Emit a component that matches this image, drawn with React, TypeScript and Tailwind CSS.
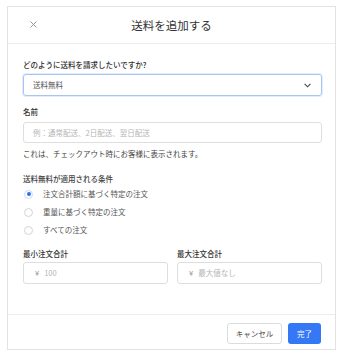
import React from 'react';

const font = { fontFamily: '"Noto Sans CJK JP", "Noto Sans", sans-serif' };

const Radio = ({ checked, label }: { checked?: boolean; label: string }) => (
  <div className="flex items-center h-[18px]">
    <span
      className={
        checked
          ? "w-[9px] h-[9px] rounded-full border border-[#c9dafb] bg-white flex items-center justify-center"
          : "w-[9px] h-[9px] rounded-full border border-[#d4d4d4] bg-white"
      }
    >
      {checked && <span className="w-[4px] h-[4px] rounded-full bg-[#2f6fed]" />}
    </span>
    <span className="ml-[10px] text-[7.5px] leading-[10px] text-[#555]">{label}</span>
  </div>
);

const App = () => {
  return (
    <div className="w-[346px] h-[355px] bg-white overflow-hidden" style={font}>
      <div className="mt-[6px] ml-[7px] w-[329px] h-[344px] border border-[#e2e2e2] flex flex-col">
        <div className="relative h-[37px] border-b border-[#ececec] flex items-center justify-center">
          <svg className="absolute left-[22px] top-[14px]" width="7" height="7" viewBox="0 0 7 7">
            <path d="M0.5 0.5 L6.5 6.5 M6.5 0.5 L0.5 6.5" stroke="#8a8a8a" strokeWidth="0.9" />
          </svg>
          <span className="text-[11.5px] leading-[14px] text-[#333]">送料を追加する</span>
        </div>

        <div className="flex-1 pt-[16px] pl-[15px] pr-[13px]">
          <div className="text-[7.5px] leading-[10px] font-medium text-[#333]">どのように送料を請求したいですか?</div>
          <div className="mt-[4px] h-[22px] rounded-[3px] border border-[#a9c4f4] shadow-[0_0_0_1px_#e4edfd] flex items-center justify-between pl-[9px] pr-[10px]">
            <span className="text-[7.5px] leading-[10px] text-[#555]">送料無料</span>
            <svg width="7" height="5" viewBox="0 0 7 5">
              <path d="M0.6 0.8 L3.5 3.8 L6.4 0.8" stroke="#444" strokeWidth="1.1" fill="none" />
            </svg>
          </div>

          <div className="mt-[11px] text-[7.5px] leading-[10px] font-medium text-[#333]">名前</div>
          <div className="mt-[5px] h-[21px] rounded-[3px] border border-[#dedede] flex items-center pl-[9px]">
            <span className="text-[7.5px] leading-[10px] text-[#b5b5b5]">例：通常配送、2日配送、翌日配送</span>
          </div>
          <div className="mt-[6px] text-[7.5px] leading-[10px] text-[#444]">これは、チェックアウト時にお客様に表示されます。</div>

          <div className="mt-[15px] text-[7.5px] leading-[10px] font-medium text-[#444]">送料無料が適用される条件</div>
          <div className="mt-[1px] pl-[1px]">
            <Radio checked label="注文合計額に基づく特定の注文" />
            <Radio label="重量に基づく特定の注文" />
            <Radio label="すべての注文" />
          </div>

          <div className="mt-[10px] grid grid-cols-2 gap-x-[9px]">
            <div>
              <div className="text-[7.5px] leading-[10px] font-medium text-[#333]">最小注文合計</div>
              <div className="mt-[3px] h-[22px] rounded-[3px] border border-[#dedede] flex items-center pl-[11px]">
                <span className="text-[7.5px] leading-[10px] text-[#999]">¥</span>
                <span className="ml-[5px] text-[7.5px] leading-[10px] text-[#b5b5b5]">100</span>
              </div>
            </div>
            <div>
              <div className="text-[7.5px] leading-[10px] font-medium text-[#333]">最大注文合計</div>
              <div className="mt-[3px] h-[22px] rounded-[3px] border border-[#dedede] flex items-center pl-[11px]">
                <span className="text-[7.5px] leading-[10px] text-[#999]">¥</span>
                <span className="ml-[5px] text-[7.5px] leading-[10px] text-[#b5b5b5]">最大値なし</span>
              </div>
            </div>
          </div>
        </div>

        <div className="h-[35px] border-t border-[#ececec] flex justify-end items-start pt-[8px] pr-[14px] gap-[6px]">
          <button className="h-[21px] w-[55px] rounded-[3px] border border-[#dcdcdc] bg-white text-[7.5px] leading-[10px] text-[#444]">
            キャンセル
          </button>
          <button className="h-[21px] w-[33px] rounded-[3px] bg-[#3478f6] text-[7.5px] leading-[10px] text-white">
            完了
          </button>
        </div>
      </div>
    </div>
  );
};

export default App;
